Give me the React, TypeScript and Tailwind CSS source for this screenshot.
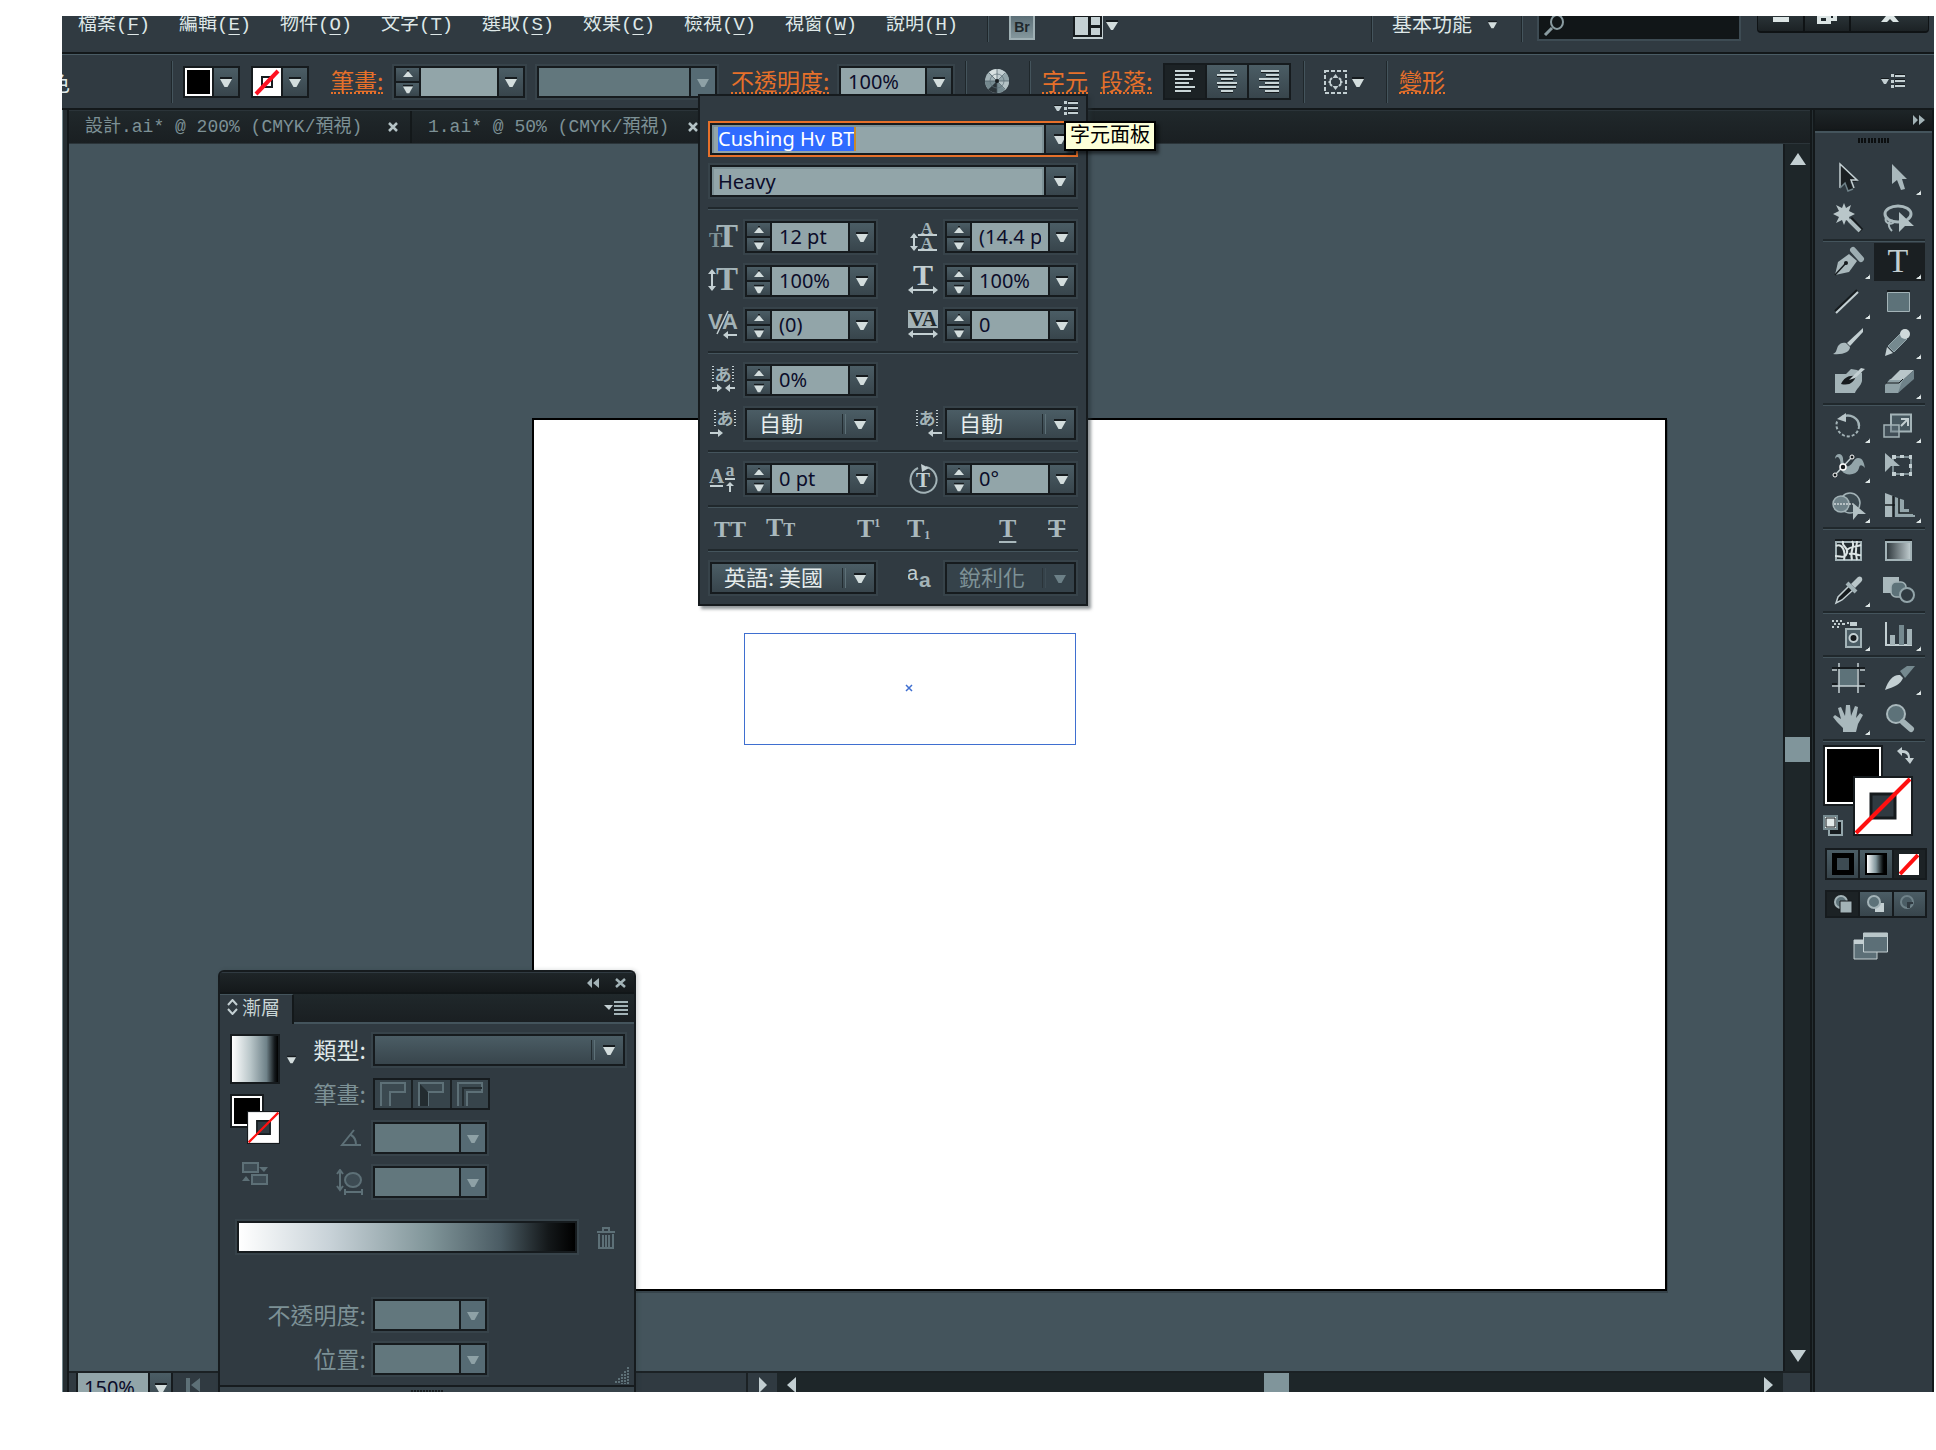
import type { ReactNode } from "react";
import clsx from "clsx";

const cjk = "font-['Noto_Sans_CJK_TC',sans-serif]";
const mono = "font-['Liberation_Mono','Noto_Sans_CJK_TC',monospace]";
const face = "bg-linear-to-b from-[#4b5d65] to-[#38454c]";
const LIGHT = "#c3cfd2";
const MID = "#a3b3b7";
const DIM = "#5d7077";
const DARK = "#161b1e";

const menus = [
  ["檔案", "F"],
  ["編輯", "E"],
  ["物件", "O"],
  ["文字", "T"],
  ["選取", "S"],
  ["效果", "C"],
  ["檢視", "V"],
  ["視窗", "W"],
  ["說明", "H"],
];

/* Small pieces */

function Down({ color = "#d3dddd", size = 12, flat }: { color?: string; size?: number; flat?: boolean }) {
  return (
    <svg width={size} height={size} viewBox="0 0 12 12" className="shrink-0">
      {!flat && <path d="M0 1h12v2H0z" fill={DARK} />}
      <path d="M0 3h12L7.500 11h-3z" fill={color} />
    </svg>
  );
}

function Up() {
  return (
    <svg width="10" height="8" viewBox="0 0 10 8">
      <path d="M4 0h2v2H4z" fill={DARK} />
      <path d="M5 1l5 6H0z" fill="#d3dddd" />
    </svg>
  );
}

function Sep() {
  return <div className="h-[42px] w-[2px] shrink-0 border-l border-[#1f272b] bg-[#44545c]" />;
}

function Rule() {
  return <div className="h-[3px] border-t-2 border-[#20282c] bg-[#44545c]" />;
}

function PanelMenu({ label }: { label: string }) {
  return (
    <button aria-label={label}>
      <svg width="24" height="15" viewBox="0 0 24 15">
        <path d="M0 4h8v1H0z" fill={DARK} />
        <path d="M0 5h8L5 10H3z" fill={LIGHT} />
        <path d="M10 0h3v3h-3zM10 6h3v3h-3zM10 11h3v3h-3zM14 1h10v2H14zM14 6h10v2H14zM14 11h10v2H14z" fill={LIGHT} />
        <path d="M14 0h10v1H14zM14 5h10v1H14zM14 10h10v1H14z" fill={DARK} />
      </svg>
    </button>
  );
}

type ComboProps = {
  label: string;
  id?: string;
  value?: string;
  spin?: boolean;
  dim?: boolean;
  width?: string;
};

function Combo({ label, id, value = "", spin, dim, width = "w-[131px]" }: ComboProps) {
  return (
    <div className={clsx("flex h-8 shrink-0 border-2 border-[#161b1e] shadow-[0_0_0_2px_#37434a]", width)}>
      {spin && (
        <div className="flex w-[25px] shrink-0 flex-col border-r-2 border-[#161b1e]">
          <button aria-label={label + " +"} className={clsx("flex flex-1 items-center justify-center border-b border-[#161b1e]", face)}>
            <Up />
          </button>
          <button aria-label={label + " -"} className={clsx("flex flex-1 items-center justify-center border-t border-[#161b1e]", face)}>
            <Down size={10} />
          </button>
        </div>
      )}
      <input
        id={id}
        aria-label={label}
        defaultValue={value}
        className={clsx(
          "min-w-0 flex-1 px-[7px] font-['Noto_Sans',sans-serif] text-[20px] leading-7 text-[#0c0d2a] outline-none",
          dim ? "bg-[#62777d]" : "bg-[#92a5a9]",
        )}
      />
      <button
        aria-label={label + " ▾"}
        className={clsx("flex w-[26px] shrink-0 items-center justify-center border-l-2 border-[#161b1e]", dim ? "bg-[#566b74]" : face)}
      >
        <Down color={dim ? "#8ea1a6" : "#d3dddd"} flat={dim} />
      </button>
    </div>
  );
}

function Choice({ label, id, value, dim, width = "w-[131px]" }: ComboProps) {
  return (
    <div
      className={clsx(
        "flex h-8 shrink-0 items-center border-2 border-[#161b1e] pr-2 shadow-[0_0_0_2px_#37434a]",
        dim ? "bg-[#35424a]" : face,
        width,
      )}
    >
      <select
        id={id}
        aria-label={label}
        className={clsx("h-7 min-w-0 flex-1 appearance-none pb-1 pl-3 text-[22px] leading-6 outline-none", cjk, dim ? "text-[#7d9196]" : "text-[#e6eded]")}
      >
        <option>{value}</option>
      </select>
      <span className={clsx("mr-2 h-5 w-[4px] border-x", dim ? "border-l-[#2b3439] border-r-[#3d4b53]" : "border-l-[#232c30] border-r-[#5d7077]")} />
      <Down color={dim ? "#6c8087" : "#d3dddd"} flat={dim} />
    </div>
  );
}

function NoneSwatch({ size }: { size: number }) {
  return (
    <svg width={size} height={size} viewBox="0 0 60 60" className="block">
      <path d="M0 0h60v60H0z" fill={DARK} />
      <path d="M2 2h56v56H2z" fill="#fff" />
      <path d="M18 18h24v24H18z" fill="#303a41" stroke={DARK} strokeWidth="3" />
      <path d="M3 57L57 3" stroke="#ff1010" strokeWidth="4" />
    </svg>
  );
}

/* Top bars */

function MenuBar() {
  return (
    <header className="flex h-[38px] shrink-0 items-start overflow-hidden border-b-2 border-[#13181a] pl-4 text-[#dfe8e8]">
      <nav className={clsx("flex text-[19px] leading-[18px]", mono)}>
        {menus.map(([name, key]) => (
          <button key={key} className="w-[101px] text-left whitespace-nowrap">
            {name}(<u className="underline-offset-4">{key}</u>)
          </button>
        ))}
      </nav>
      <div className="h-[26px] w-[2px] border-l border-[#1f272b] bg-[#44545c]" />
      <button aria-label="Bridge" className="ml-5 h-6 w-[26px] border-2 border-t-0 border-[#9fb0b4] bg-linear-to-b from-[#5c6f77] to-[#84979c] font-['Liberation_Sans',sans-serif] text-sm leading-5 font-bold text-[#20282c]">
        Br
      </button>
      <button aria-label="排列文件" className="ml-[38px] flex">
        <svg width="45" height="23" viewBox="0 0 45 23">
          <path d="M0 0h30v23H0z" fill={LIGHT} />
          <path d="M1 0h15v20H1z" fill="#c5d1d4" stroke={DARK} strokeWidth="2" />
          <path d="M17 0h11v10H17zM17 11h11v9H17z" fill="#c5d1d4" stroke={DARK} strokeWidth="2" />
          <path d="M33 4h12v2H33z" fill={DARK} />
          <path d="M33 6h12l-5 8h-2z" fill="#d3dddd" />
        </svg>
      </button>
      <div className="ml-auto h-[26px] w-[2px] border-l border-[#1f272b] bg-[#44545c]" />
      <button className={clsx("ml-[19px] flex items-center gap-4 text-[20px] leading-4", cjk)}>
        基本功能
        <Down size={9} />
      </button>
      <div className="ml-6 h-[26px] w-[2px] border-l border-[#1f272b] bg-[#44545c]" />
      <label className="ml-[14px] flex h-[25px] w-[204px] border-2 border-t-0 border-[#3d4b53] bg-[#111618] pl-1">
        <svg width="22" height="20" viewBox="0 0 22 20" fill="none" stroke="#8a9ca1" strokeWidth="2">
          <ellipse cx="14" cy="6" rx="6" ry="7" />
          <path d="M9 12L2 19" strokeWidth="3" />
        </svg>
        <input aria-label="搜尋" className="min-w-0 flex-1 bg-transparent text-sm outline-none" />
      </label>
      <div className="mr-[5px] ml-4 flex h-[17px] overflow-hidden rounded-b border-x border-b-2 border-[#0f1315] bg-linear-to-b from-[#2a3337] to-[#1c2225]">
        <button aria-label="最小化" className="flex w-[47px] justify-center border-r-2 border-[#0f1315]">
          <svg width="16" height="6"><path d="M0 1h16v5H0z" fill="#dce5e5" /></svg>
        </button>
        <button aria-label="還原" className="flex w-[46px] justify-center border-r-2 border-[#0f1315]">
          <svg width="20" height="8"><path d="M0 0h20v5h-6v3H0z" fill="#dce5e5" /><path d="M4 2h5v3H4zM14 0h2v2h-2z" fill="#20282c" /></svg>
        </button>
        <button aria-label="關閉" className="flex w-[77px] justify-center">
          <svg width="18" height="6"><path d="M5 0h8l5 6h-6L9 3 6 6H0z" fill="#dce5e5" /></svg>
        </button>
      </div>
    </header>
  );
}

function Orange({ children, width }: { children: ReactNode; width?: string }) {
  return (
    <div className={clsx("shrink-0", width)}>
      <button className={clsx("border-b-2 border-dotted border-[#e6702a] text-[23px] leading-6 whitespace-nowrap text-[#e6702a]", cjk)}>
        {children}
      </button>
    </div>
  );
}

const alignLines = {
  left: "M2 1h20M2 5h14M2 9h18M2 13h14M2 17h20M2 21h16",
  center: "M5 1h14M2 5h20M6 9h12M2 13h20M3 17h18M6 21h12",
  right: "M4 1h18M9 5h13M2 9h20M8 13h14M2 17h20M8 21h14",
};

function ControlBar() {
  return (
    <div className="flex h-14 shrink-0 items-center overflow-hidden border-t border-b-2 border-t-[#4a5c65] border-b-[#13181a]">
      <div className={clsx("flex w-[109px] shrink-0 overflow-hidden text-[22px] text-[#dfe8e8]", cjk)}>
        <span className="flex w-2 justify-end overflow-hidden">色</span>
      </div>
      <Sep />
      <button aria-label="填色" className={clsx("ml-[10px] flex h-8 w-[57px] shrink-0 items-center border-2 border-[#161b1e]", face)}>
        <span className="h-7 w-[27px] border-2 border-white bg-black" />
        <span className="flex h-7 flex-1 items-center justify-center border-l-2 border-[#161b1e]">
          <Down />
        </span>
      </button>
      <button aria-label="筆畫顏色" className={clsx("ml-[11px] flex h-8 w-[58px] shrink-0 items-center border-2 border-[#161b1e]", face)}>
        <svg width="28" height="28" viewBox="0 0 28 28">
          <path d="M0 0h28v28H0z" fill="#fff" />
          <path d="M9 9h10v10H9z" fill="#fff" stroke={DARK} strokeWidth="2" />
          <path d="M3 26L25 3" stroke="#ff1020" strokeWidth="4" />
        </svg>
        <span className="flex h-7 flex-1 items-center justify-center border-l-2 border-[#161b1e]">
          <Down />
        </span>
      </button>
      <div className="w-[22px] shrink-0" />
      <Orange width="w-[63px]">筆畫:</Orange>
      <Combo label="筆畫寬度" spin />
      <div className="w-3 shrink-0" />
      <Combo label="筆刷" dim width="w-[180px]" />
      <div className="w-[14px] shrink-0" />
      <Orange width="w-[108px]">不透明度:</Orange>
      <Combo label="不透明度" value="100%" width="w-[114px]" />
      <div className="w-3 shrink-0" />
      <Sep />
      <button aria-label="重新上色圖稿" className="mr-[19px] ml-[18px] shrink-0">
        <svg width="25" height="25" viewBox="0 0 25 25">
          <circle cx="12" cy="12" r="12" fill="#a3b3b7" />
          <path d="M12 12L4 3a12 12 0 0 1 8-3z" fill="#d8e1e1" />
          <path d="M12 12V0a12 12 0 0 1 9 4z" fill="#c3cfd2" />
          <path d="M12 12l9-8a12 12 0 0 1 3 8z" fill="#93a5aa" />
          <path d="M12 12h12a12 12 0 0 1-4 9z" fill="#b3c1c4" />
          <path d="M12 12l8 9a12 12 0 0 1-8 3z" fill="#75898f" />
          <path d="M12 12v12a12 12 0 0 1-9-4z" fill="#2b3439" />
          <path d="M12 12l-9 8a12 12 0 0 1-3-8z" fill="#75898f" />
          <path d="M4 4l16 16M20 4L4 20M12 0v24M0 12h24" stroke="#4b5d65" strokeWidth=".7" />
          <circle cx="12" cy="12" r="7" fill="none" stroke="#5c6f77" strokeWidth=".7" />
          <circle cx="12" cy="12" r="2" fill={DARK} />
        </svg>
      </button>
      <Sep />
      <div className="w-[11px] shrink-0" />
      <Orange width="w-[58px]">字元</Orange>
      <Orange width="w-[63px]">段落:</Orange>
      <div className="flex h-[37px] w-[128px] shrink-0 border-2 border-[#161b1e]">
        {(["left", "center", "right"] as const).map((side) => (
          <button
            key={side}
            aria-label={side}
            className={clsx(
              "flex flex-1 items-center justify-center border-r-2 border-[#161b1e] last:border-r-0",
              side === "left" ? "bg-[#1c2225]" : face,
            )}
          >
            <svg width="24" height="24" viewBox="0 0 24 24">
              <path d={alignLines[side]} transform="translate(0 1)" stroke={DARK} strokeWidth="2" />
              <path d={alignLines[side]} stroke="#c9d5d7" strokeWidth="2" />
            </svg>
          </button>
        ))}
      </div>
      <div className="w-3 shrink-0" />
      <Sep />
      <button aria-label="對齊" className="mr-[22px] ml-[19px] flex shrink-0 items-center gap-[5px]">
        <svg width="23" height="24" viewBox="0 0 23 24" fill="none" stroke={LIGHT}>
          <path d="M1 1h21v22H1z" strokeWidth="2" strokeDasharray="4 2" />
          <path d="M8 8l-2 2M15 8l2 2M8 16l-2-2M15 16l2-2" strokeWidth="2" />
          <path d="M11.500 4l-3 4h6zM11.500 20l-3-4h6zM4 12l3-3v6zM19 12l-3-3v6z" fill={LIGHT} stroke="none" />
        </svg>
        <Down />
      </button>
      <Sep />
      <div className="w-[11px] shrink-0" />
      <Orange>變形</Orange>
      <div className="mr-[29px] ml-auto flex">
        <PanelMenu label="控制列選單" />
      </div>
    </div>
  );
}

/* Document area */

function Tab({ title, width }: { title: string; width: string }) {
  return (
    <div className={clsx("flex h-full items-center justify-between border-r-2 border-[#13181a] pr-3 pl-4", width)}>
      <a href="#" className={clsx("text-[18px] whitespace-nowrap text-[#7d9196]", mono)}>
        {title}
      </a>
      <button aria-label="關閉檔案">
        <svg width="10" height="10" viewBox="0 0 10 10">
          <path d="M1 1l8 8M9 1L1 9" stroke="#b5c3c6" strokeWidth="2.500" />
        </svg>
      </button>
    </div>
  );
}

function Canvas() {
  return (
    <main className="relative min-w-0 flex-1 overflow-hidden bg-[#44545c]">
      <div className="absolute top-[274px] left-[463px] h-[873px] w-[1135px] border-2 border-black bg-white shadow-[1px_2px_0_#36434a]" />
      <div className="absolute top-[489px] left-[675px] flex h-[112px] w-[332px] items-center justify-center border border-[#3f6fd0] pr-[3px] pb-[2px]">
        <svg width="8" height="8" viewBox="0 0 8 8">
          <path d="M1 1l6 6M7 1L1 7" stroke="#3f6fd0" strokeWidth="1.500" />
        </svg>
      </div>
    </main>
  );
}

function StatusBar() {
  return (
    <div className="flex h-[21px] shrink-0 overflow-hidden border-t-2 border-[#1b2124]">
      <div className="ml-[7px] flex h-[30px] w-[97px] shrink-0 border-x-2 border-[#161b1e]">
        <input
          aria-label="縮放"
          defaultValue="150%"
          className="w-[70px] bg-[#92a5a9] px-[6px] font-['Noto_Sans',sans-serif] text-[20px] text-[#0c0d2a] outline-none"
        />
        <button aria-label="縮放選項" className={clsx("flex flex-1 items-center justify-center border-l-2 border-[#161b1e]", face)}>
          <Down />
        </button>
      </div>
      <button aria-label="第一頁" className="ml-3 shrink-0 self-start pt-[5px]">
        <svg width="16" height="14" viewBox="0 0 16 14">
          <path d="M1 0h4v14H1zM15 0v14L6 7z" fill={DIM} />
        </svg>
      </button>
      <div className="ml-auto" />
      <button aria-label="狀態選單" className="flex w-[31px] shrink-0 items-start justify-center border-l-2 border-[#1b2124] pt-1">
        <svg width="8" height="16" viewBox="0 0 8 16"><path d="M0 0l8 8-8 8z" fill={LIGHT} /></svg>
      </button>
      <div className="flex w-[1006px] shrink-0 justify-between bg-[#1e2629] px-[10px] pt-1">
        <button aria-label="向左捲動" className="self-start">
          <svg width="9" height="16" viewBox="0 0 9 16"><path d="M9 0v16L0 8z" fill={LIGHT} /></svg>
        </button>
        <div className="-mt-1 mr-2 h-6 w-[25px] bg-[#80959b]" />
        <button aria-label="向右捲動" className="self-start">
          <svg width="9" height="16" viewBox="0 0 9 16"><path d="M0 0v16l9-8z" fill={LIGHT} /></svg>
        </button>
      </div>
      <div className="w-[27px] shrink-0 bg-[#303a41]" />
    </div>
  );
}

function DocumentArea() {
  return (
    <div className="flex min-w-0 flex-1 flex-col">
      <div className="flex h-[34px] shrink-0 border-t border-b border-t-[#2b3439] border-b-[#2b3439] bg-linear-to-b from-[#20282b] to-[#1a1f22]">
        <Tab title="設計.ai* @ 200% (CMYK/預視)" width="w-[343px]" />
        <Tab title="1.ai* @ 50% (CMYK/預視)" width="w-[300px]" />
      </div>
      <div className="flex min-h-0 flex-1">
        <Canvas />
        <div className="flex w-[27px] shrink-0 flex-col items-center justify-between border-l-2 border-[#161b1e] bg-[#1e2629] py-[9px]">
          <button aria-label="向上捲動">
            <svg width="16" height="12" viewBox="0 0 16 12"><path d="M8 0l8 12H0z" fill={LIGHT} /></svg>
          </button>
          <div className="mb-4 h-[25px] w-full bg-[#80959b]" />
          <button aria-label="向下捲動">
            <svg width="16" height="12" viewBox="0 0 16 12"><path d="M0 0h16L8 12z" fill={LIGHT} /></svg>
          </button>
        </div>
      </div>
      <StatusBar />
    </div>
  );
}

/* Tools */

const serif = { fontFamily: "Liberation Serif, serif" };

function Tool({ label, flyout, active, children }: { label: string; flyout?: boolean; active?: boolean; children: ReactNode }) {
  return (
    <button aria-label={label} className={clsx("flex h-10 w-[51px] items-center pl-[9px]", active && "border-y border-[#303a41] bg-[#1a1f22]")}>
      <svg width="40" height="40" viewBox="0 -4 40 40">
        {children}
        {flyout && <path d="M38 28v5h-5l2-2h1v-1h1z" fill="#dbe4e4" />}
      </svg>
    </button>
  );
}

function ToolRule() {
  return (
    <div className="flex h-1 w-[102px] flex-col justify-center">
      <div className="h-[3px] border-t-2 border-[#20282c] bg-[#44545c]" />
    </div>
  );
}

function Tools() {
  return (
    <aside className="flex w-[119px] shrink-0 flex-col border-r-2 border-[#13181a]">
      <div className="flex h-[21px] shrink-0 items-center justify-end border-b-2 border-[#13181a] bg-linear-to-b from-[#1e2528] to-[#15191b] pr-[7px]">
        <button aria-label="收合">
          <svg width="12" height="10" viewBox="0 0 12 10"><path d="M0 0l5 5-5 5zM6 0l6 5-6 5z" fill={MID} /></svg>
        </button>
      </div>
      <div className="flex h-[27px] shrink-0 justify-center border-t-2 border-[#44545c] pt-[5px]">
        <svg width="32" height="5"><path d="M1 0v5M4 0v5M7 0v5M11 0v5M14 0v5M17 0v5M21 0v5M24 0v5M27 0v5M30 0v5" stroke="#0c0f10" strokeWidth="2" /></svg>
      </div>
      <div className="flex flex-col pl-2">
        <div className="flex flex-wrap">
          <Tool label="選取工具">
            <path d="M8 2v24l5-5 3 8 5-2-3-7h7z" fill="#1a1f22" />
            <path d="M8 26V2l17 16h-6l3 8" fill="none" stroke={LIGHT} strokeWidth="1.500" />
            <path d="M8 26l5-5 3 8 5-2" fill="none" stroke="#6f8289" strokeWidth="1.500" />
          </Tool>
          <Tool label="直接選取工具" flyout>
            <path d="M9 2v20l5-4 4 10 4-1-3-10h5z" fill="#a9b8bc" />
          </Tool>
          <Tool label="魔術棒工具">
            <path d="M18 17l11 12" stroke={DARK} strokeWidth="6" />
            <path d="M17 18l11 11" stroke="#a9b8bc" strokeWidth="4" />
            <path d="M12 1l2 5 5-3-2 6 6 3-6 3 2 6-5-3-2 5-2-5-6 3 3-6-6-3 6-3-3-6 6 3z" fill="#b9c6c9" />
          </Tool>
          <Tool label="套索工具">
            <ellipse cx="15" cy="12" rx="13" ry="8" fill="none" stroke="#a9b8bc" strokeWidth="3" />
            <path d="M3 15c-2 6 4 8 7 6s-3-4-4 0 1 6 3 8" fill="none" stroke="#a9b8bc" strokeWidth="2" />
            <path d="M16 10v20l6-6h9z" fill="#b3c1c4" />
          </Tool>
        </div>
        <ToolRule />
        <div className="flex flex-wrap">
          <Tool label="鋼筆工具" flyout>
            <path d="M3 29L6 16 17 8l8 7-8 11z" fill="#a9b8bc" />
            <path d="M3 29L14 17" stroke={DARK} strokeWidth="1.500" />
            <circle cx="14" cy="17" r="2" fill={DARK} />
            <path d="M21 4l8 9" stroke="#9dadb2" strokeWidth="6" strokeLinecap="round" />
          </Tool>
          <Tool label="文字工具" flyout active>
            <text x="15" y="26" fontSize="34" textAnchor="middle" fill={LIGHT} style={serif}>T</text>
          </Tool>
          <Tool label="線段區段工具" flyout>
            <path d="M3 25L25 4" stroke={DARK} strokeWidth="2" />
            <path d="M4 27L26 6" stroke={LIGHT} strokeWidth="2" />
          </Tool>
          <Tool label="矩形工具" flyout>
            <path d="M4 4h23v2H4z" fill={DARK} />
            <path d="M4.500 6.500h22v19h-22z" fill="#5d7279" stroke={MID} />
          </Tool>
          <Tool label="繪圖筆刷工具">
            <path d="M31 2v4L18 20l-3-3z" fill={LIGHT} />
            <path d="M14 17l4 4c0 5-7 8-17 7 4-2 3-4 5-8 2-3 5-4 8-3z" fill="#a9b8bc" />
          </Tool>
          <Tool label="鉛筆工具" flyout>
            <path d="M2 30l2-9 6 6z" fill={LIGHT} />
            <path d="M5 20L18 7l6 6L11 26z" fill="#75898f" stroke="#93a5aa" />
            <circle cx="22" cy="8" r="5" fill="#d0dadb" />
          </Tool>
          <Tool label="點滴筆刷工具">
            <path d="M3 8h11l5-5 6 1 5 3v8c-1 5-6 8-7 12H3z" fill="#a3b3b7" />
            <path d="M9 18c3-6 7-9 15-8-2 6-6 10-15 8z" fill={DARK} />
            <path d="M17 14L29 2l4 1-10 9z" fill={LIGHT} />
          </Tool>
          <Tool label="橡皮擦工具" flyout>
            <path d="M2 27v-8l5-6h14l-1 8-5 6z" fill="#8fa1a6" />
            <path d="M7 14L17 4h14L20 14z" fill="#b9c6c9" />
            <path d="M20 14L31 4v9L15 27l3-9z" fill="#6f8289" />
            <path d="M3 17h13l4-4" stroke={DARK} fill="none" />
          </Tool>
        </div>
        <ToolRule />
        <div className="flex flex-wrap">
          <Tool label="旋轉工具" flyout>
            <path d="M10 7c8-4 17 1 17 9" fill="none" stroke={MID} strokeWidth="2.500" />
            <path d="M27 16c0 8-9 13-16 9S3 14 6 10" fill="none" stroke={MID} strokeWidth="2" strokeDasharray="3 2" />
            <path d="M5 9l9-6v9z" fill="#b9c6c9" />
          </Tool>
          <Tool label="縮放工具" flyout>
            <path d="M8 4.500h20v17H8z" fill="#46575f" stroke={MID} strokeWidth="2" />
            <path d="M1 15h15v12H1z" fill="#5c6f7766" stroke={MID} strokeWidth="1.500" />
            <path d="M18 16l6-6M18 9h7v7" stroke={LIGHT} strokeWidth="2" fill="none" />
          </Tool>
          <Tool label="寬度工具" flyout>
            <path d="M3 9c0-6 7-7 8-1 0 7 3 9 6 8 4-2 5-8 9-8 5 0 6 5 7 10-3-3-5-4-6 0-2 8-14 8-17 3-3-4 0-9-3-13-1-2-3-1-4 1z" fill="#93a5aa" />
            <path d="M3 25L20 7" stroke={LIGHT} strokeWidth="1.500" />
            <circle cx="11" cy="17" r="3" fill={DARK} stroke="#fff" strokeWidth="1.500" />
            <circle cx="3" cy="25" r="2" fill={DARK} stroke="#fff" />
            <circle cx="20" cy="7" r="2" fill={DARK} stroke="#fff" />
          </Tool>
          <Tool label="任意變形工具">
            <path d="M10 7h18v17H10z" fill="none" stroke="#93a5aa" strokeWidth="1.500" />
            <path d="M9 5h4v4H9zM17 5h4v3h-4zM26 5h3v4h-3zM26 14h3v4h-3zM26 22h3v4h-3zM17 23h4v3h-4zM9 22h4v4H9z" fill={LIGHT} />
            <path d="M2 3v19l6-6h9z" fill="#a9b8bc" />
          </Tool>
          <Tool label="形狀建立程式工具" flyout>
            <circle cx="18" cy="13" r="10" fill="#3b4950" stroke={MID} strokeWidth="1.500" />
            <circle cx="9" cy="14" r="8" fill="#6f8289" stroke={MID} strokeWidth="1.500" />
            <path d="M2 14h19" stroke="#fff" strokeDasharray="2 1" />
            <path d="M21 13v17l5-6h8z" fill="#b3c1c4" />
          </Tool>
          <Tool label="透視格點工具" flyout>
            <path d="M2 3l8 3v21H2z" fill="#a9b8bc" />
            <path d="M12 7l9 3v9h5v3h4v3h2v2H12z" fill="#93a5aa" />
            <path d="M2 15h10M10 6v21M16 8v15h14" stroke={DARK} strokeWidth="1.500" fill="none" />
          </Tool>
        </div>
        <ToolRule />
        <div className="flex flex-wrap">
          <Tool label="網格工具">
            <path d="M3 5h27v2H3z" fill={DARK} />
            <path d="M4 8h25v18H4z" fill="#232c30" stroke={MID} strokeWidth="2" />
            <path d="M4 12c6-3 10 5 8 14M11 7c-2 6 6 6 4 12s-5 3-12 3M20 7c4 6-3 8 0 19M15 16c4-4 9-3 14-5M17 20c4-2 8 2 12 1M25 7c0 6-3 9 0 19" stroke="#dbe4e4" strokeWidth="2" fill="none" />
          </Tool>
          <Tool label="漸層工具">
            <defs>
              <linearGradient id="tool-grad">
                <stop offset="0" stopColor="#2b3439" />
                <stop offset="1" stopColor="#c3cfd2" />
              </linearGradient>
            </defs>
            <path d="M2 5h27v2H2z" fill={DARK} />
            <path d="M3 8h25v18H3z" fill="url(#tool-grad)" stroke={MID} strokeWidth="2" />
          </Tool>
          <Tool label="檢色滴管工具" flyout>
            <path d="M4 29l2-6L17 12l4 4L10 26z" fill={DARK} stroke={LIGHT} strokeWidth="1.500" />
            <path d="M15 9l9 9" stroke={MID} strokeWidth="4" />
            <path d="M19 10L26 3c3-2 6 2 3 5l-6 6z" fill="#b9c6c9" />
          </Tool>
          <Tool label="漸變工具">
            <path d="M0 3h16v16H0z" fill="#a9b8bc" />
            <rect x="8" y="8" width="15" height="15" rx="5" fill="#5d7279" stroke={MID} strokeWidth="1.500" />
            <circle cx="24" cy="21" r="7" fill="#303a41" stroke="#93a5aa" strokeWidth="2" />
          </Tool>
        </div>
        <ToolRule />
        <div className="flex flex-wrap">
          <Tool label="符號噴灑器工具" flyout>
            <path d="M0 3h2M4 3h2M8 3h2M2 6h2M6 6h2M10 6h3M0 9h2M5 9h2M15 5h2" stroke={LIGHT} strokeWidth="2" />
            <path d="M18 4h7v4h-7z" fill={LIGHT} />
            <path d="M14 11h15v18H14z" fill="#4b5d65" stroke={MID} strokeWidth="2" />
            <circle cx="21.500" cy="20" r="4" fill={DARK} stroke={LIGHT} strokeWidth="2" />
          </Tool>
          <Tool label="長條圖工具" flyout>
            <path d="M3 4v23h26" stroke={LIGHT} strokeWidth="2" fill="none" />
            <path d="M7 17h5v10H7zM24 11h5v16h-5z" fill={MID} />
            <path d="M16 7h5v20h-5z" fill="#75898f" />
          </Tool>
        </div>
        <ToolRule />
        <div className="flex flex-wrap">
          <Tool label="工作區域工具">
            <path d="M7 7h18v17H7z" fill="#5d7279" />
            <path d="M7 1v30M26 1v30" stroke={LIGHT} strokeWidth="1.500" />
            <path d="M0 8h5M28 8h5M0 24h33" stroke={LIGHT} strokeWidth="1.500" />
            <path d="M0 6h33M0 22h5M28 22h5" stroke={DARK} strokeWidth="2" />
          </Tool>
          <Tool label="切片工具" flyout>
            <path d="M17 9L24 4h8L22 16z" fill="#75898f" />
            <path d="M2 28C5 18 11 12 17 13l3 3C18 22 11 25 2 28z" fill="#c3cfd2" />
          </Tool>
          <Tool label="手形工具" flyout>
            <path d="M11 30v-4l-6-6-4-5 2-2 6 4L6 6l3-1 4 9 1-11h4l1 11 4-10 3 1-2 11 4-5 3 2-5 9-2 8z" fill="#a9b8bc" />
          </Tool>
          <Tool label="放大鏡工具">
            <circle cx="13" cy="12" r="9" fill="#5d7279" stroke="#a9b8bc" strokeWidth="2" />
            <path d="M20 20l8 7" stroke="#a3b3b7" strokeWidth="6" strokeLinecap="round" />
          </Tool>
        </div>
        <ToolRule />
        <div className="relative mt-[3px] h-[91px] w-[102px]">
          <button aria-label="填色" className="absolute top-0 left-0 h-[61px] w-[60px] border-2 border-[#161b1e]">
            <span className="block h-full border-2 border-white bg-black" />
          </button>
          <button aria-label="筆畫" className="absolute top-[31px] left-[30px]">
            <NoneSwatch size={60} />
          </button>
          <button aria-label="切換填色與筆畫" className="absolute top-0 left-[74px]">
            <svg width="18" height="20" viewBox="0 0 18 20">
              <path d="M0 6l5-4v3c6 0 8 3 8 8h4l-4 6-5-6h3c0-3-2-5-6-5v3z" fill={LIGHT} />
            </svg>
          </button>
          <button aria-label="預設填色與筆畫" className="absolute top-[69px] left-0">
            <svg width="20" height="22" viewBox="0 0 20 22">
              <path d="M6 7h13v14H6z" fill={DARK} stroke="#93a5aa" strokeWidth="2" />
              <path d="M1 2h13v13H1z" fill="#e2eaea" stroke="#75898f" strokeWidth="2" />
              <path d="M3 4h9v9H3z" fill="#e2eaea" stroke={DARK} />
            </svg>
          </button>
        </div>
        <div className="mt-3 ml-[2px] flex h-8 w-[102px] border-2 border-[#161b1e]">
          <button aria-label="顏色" className={clsx("flex flex-1 items-center justify-center border-r-2 border-[#161b1e]", face)}>
            <span className="h-[22px] w-[22px] border-[5px] border-black bg-[#3d4b53]" />
          </button>
          <button aria-label="漸層" className={clsx("flex flex-1 items-center justify-center border-r-2 border-[#161b1e]", face)}>
            <span className="h-[22px] w-[22px] border-2 border-black bg-linear-to-r from-white via-[#80959b] to-black" />
          </button>
          <button aria-label="無" className="flex flex-1 items-center justify-center bg-[#1c2225]">
            <svg width="20" height="21" viewBox="0 0 20 21">
              <path d="M0 0h20v21H0z" fill="#fff" />
              <path d="M1 20L19 1" stroke="#ff1010" strokeWidth="4" />
            </svg>
          </button>
        </div>
        <div className="mt-[10px] ml-[2px] flex h-7 w-[102px] border-2 border-[#161b1e]">
          {["一般繪製", "繪製下層", "繪製內側"].map((mode, i) => (
            <button
              key={mode}
              aria-label={mode}
              className={clsx("flex flex-1 items-center justify-center border-r-2 border-[#161b1e] last:border-r-0", i === 0 ? "bg-[#1c2225]" : face)}
            >
              <svg width="20" height="20" viewBox="0 0 20 20">
                {i === 1 && <path d="M9 9h9v9H9z" fill={LIGHT} />}
                <circle cx="8" cy="8" r="6" fill={i === 2 ? "#4b5d65" : "#5d7279"} stroke={i === 2 ? "#6f8289" : MID} strokeWidth="2" />
                {i === 0 && <path d="M7 7h12v12H7z" fill={MID} stroke={DARK} />}
                {i === 2 && <path d="M8 8h6v2h-3v4H8z" fill="#303a41" />}
              </svg>
            </button>
          ))}
        </div>
        <button aria-label="變更螢幕模式" className="mt-[14px] ml-[30px] w-[35px]">
          <svg width="35" height="28" viewBox="0 0 35 28">
            <path d="M1 8h23v19H1z" fill="#5c6f77" stroke={LIGHT} />
            <path d="M1 8h9v4H1z" fill={LIGHT} />
            <path d="M10.500 1h24v19h-24z" fill="#5c6f77" stroke={LIGHT} />
            <path d="M10 1h25v4H10z" fill="#b9c6c9" />
          </svg>
        </button>
      </div>
    </aside>
  );
}

/* Character panel */

function Glyph({ children }: { children: ReactNode }) {
  return (
    <svg width="37" height="32" viewBox="0 0 37 32" className="shrink-0" style={serif} fill={MID}>
      {children}
    </svg>
  );
}

function HArrow({ y }: { y: number }) {
  return <path d={`M0 ${y}l5-4v3h20v-3l5 4-5 4v-3H5v3z`} fill={LIGHT} />;
}

function VArrow({ x }: { x: number }) {
  return <path d={`M${x} 4l4 5h-3v12h3l-4 5-4-5h3V9h-3z`} fill={LIGHT} />;
}

function Kana({ x }: { x: number }) {
  return (
    <>
      <path d={`M${x} 2v16M${x + 20} 2v16`} stroke={LIGHT} strokeWidth="2" strokeDasharray="1 2" />
      <text x={x + 10} y="17" fontSize="17" fontWeight="bold" textAnchor="middle" fontFamily="Noto Sans CJK JP, sans-serif">あ</text>
    </>
  );
}

function Row({ children, last }: { children: ReactNode; last?: boolean }) {
  return <div className={clsx("flex items-center", !last && "mb-3")}>{children}</div>;
}

function CharacterPanel() {
  return (
    <section aria-label="字元面板" className="absolute top-[78px] left-[636px] w-[390px] border-2 border-[#161b1e] bg-[#303a41] px-2 pb-[10px] shadow-[3px_3px_3px_#26303580]">
      <div className="flex h-[25px] items-start justify-end pt-[5px]">
        <PanelMenu label="字元面板選單" />
      </div>
      <div className="flex h-9 border-2 border-[#e6702a]">
        <div className="flex flex-1 border-2 border-[#161b1e]">
          <div className="flex flex-1 items-center border-2 border-b-0 border-[#7d9196] bg-[#92a5a9] pb-[2px] pl-1">
            <input
              aria-label="字體"
              defaultValue="Cushing Hv BT"
              className="border-r-2 border-[#c98a2a] bg-[#2f6bff] font-['Noto_Sans',sans-serif] text-[20px] leading-6 text-white outline-none [field-sizing:content]"
            />
          </div>
          <button aria-label="字體清單" className={clsx("flex w-[30px] items-center justify-center border-l-2 border-[#161b1e]", face)}>
            <Down />
          </button>
        </div>
      </div>
      <div className="mx-[2px] mt-2 mb-[10px] flex h-8 border-2 border-[#161b1e] shadow-[0_0_0_2px_#37434a]">
        <input
          aria-label="字體樣式"
          defaultValue="Heavy"
          className="min-w-0 flex-1 border-2 border-b-0 border-[#7d9196] bg-[#92a5a9] pl-1 font-['Noto_Sans',sans-serif] text-[20px] leading-6 text-[#0c0d2a] outline-none"
        />
        <button aria-label="字體樣式清單" className={clsx("flex w-[30px] items-center justify-center border-l-2 border-[#161b1e]", face)}>
          <Down />
        </button>
      </div>
      <Rule />
      <div className="mt-[11px] mb-[10px]">
        <Row>
          <Glyph>
            <text x="1" y="26" fontSize="20" fontWeight="bold" fill="#7d9196">T</text>
            <text x="8" y="26" fontSize="33" fontWeight="bold" fill={MID}>T</text>
          </Glyph>
          <Combo label="字體大小" value="12 pt" spin />
          <div className="w-8" />
          <Glyph>
            <text x="19" y="13" fontSize="17" fontWeight="bold" textAnchor="middle">A</text>
            <text x="19" y="28" fontSize="17" fontWeight="bold" textAnchor="middle">A</text>
            <path d="M10 14h19M10 29h19" stroke={LIGHT} strokeWidth="2" />
            <path d="M6 12l4 5H7v8h3l-4 5-4-5h3v-8H2z" fill={LIGHT} />
          </Glyph>
          <Combo label="行距" value="(14.4 pt)" spin />
        </Row>
        <Row>
          <Glyph>
            <VArrow x={4} />
            <text x="8" y="25" fontSize="33" fontWeight="bold">T</text>
          </Glyph>
          <Combo label="垂直縮放" value="100%" spin />
          <div className="w-8" />
          <Glyph>
            <text x="15" y="20" fontSize="30" fontWeight="bold" textAnchor="middle" fill={LIGHT}>T</text>
            <HArrow y={25} />
          </Glyph>
          <Combo label="水平縮放" value="100%" spin />
        </Row>
        <Row last>
          <Glyph>
            <g fontFamily="Liberation Sans, sans-serif" fontSize="22" fontWeight="bold" fill={MID}>
              <text x="0" y="20">V</text>
              <text x="14" y="20">A</text>
            </g>
            <path d="M9 25L20 2" stroke={LIGHT} strokeWidth="1.500" />
            <path d="M15 26l5-4v3h9v2h-9v3z" fill={LIGHT} />
          </Glyph>
          <Combo label="特殊字距" value="(0)" spin />
          <div className="w-8" />
          <Glyph>
            <path d="M0 1h30v18H0z" fill={MID} />
            <text x="15" y="17" fontSize="21" fontWeight="bold" textAnchor="middle" fill="#20282c">VA</text>
            <HArrow y={25} />
          </Glyph>
          <Combo label="字距微調" value="0" spin />
        </Row>
      </div>
      <Rule />
      <div className="mt-[10px] mb-[10px]">
        <Row>
          <Glyph>
            <Kana x={5} />
            <path d="M4 23h5v-3l5 4-5 4v-3H4zM27 23h-5v-3l-5 4 5 4v-3h5z" fill={LIGHT} />
          </Glyph>
          <Combo label="比例間距" value="0%" spin />
        </Row>
        <Row last>
          <Glyph>
            <Kana x={7} />
            <path d="M2 24h8v-3l5 4-5 4v-3H2z" fill={LIGHT} />
          </Glyph>
          <Choice label="插入空格(左)" value="自動" />
          <div className="w-8" />
          <Glyph>
            <Kana x={9} />
            <path d="M34 24h-9v-3l-5 4 5 4v-3h9z" fill={LIGHT} />
          </Glyph>
          <Choice label="插入空格(右)" value="自動" />
        </Row>
      </div>
      <Rule />
      <div className="my-[10px]">
        <Row last>
          <Glyph>
            <text x="1" y="20" fontSize="21" fontWeight="bold">A</text>
            <text x="22" y="13" fontSize="18" fontWeight="bold" textAnchor="middle">a</text>
            <path d="M2 23h13M17 16h10" stroke={LIGHT} strokeWidth="2" />
            <path d="M22 19l4 4h-3v6h-2v-6h-3z" fill={LIGHT} />
          </Glyph>
          <Combo label="基線微移" value="0 pt" spin />
          <div className="w-8" />
          <Glyph>
            <path d="M18 4a13 13 0 1 1-8 1" fill="none" stroke={MID} strokeWidth="2" />
            <path d="M13 1l8 4-7 4z" fill={LIGHT} />
            <text x="15" y="24" fontSize="21" fontWeight="bold" textAnchor="middle" fill={LIGHT}>T</text>
          </Glyph>
          <Combo label="字元旋轉" value="0°" spin />
        </Row>
      </div>
      <Rule />
      <div className="flex h-[41px] items-center pl-[6px] font-['Liberation_Serif',serif] text-[26px] leading-6 font-bold text-[#a9b8bc]">
        <button className="w-[52px] text-left text-[24px]">TT</button>
        <button className="w-[91px] text-left">
          T<span className="text-[18px]">T</span>
        </button>
        <button className="flex w-[50px] items-start">
          T<span className="text-xs leading-3">1</span>
        </button>
        <button className="flex w-[92px] items-end">
          T<span className="text-xs leading-3">1</span>
        </button>
        <button className="w-[49px] text-left underline underline-offset-4">T</button>
        <button className="line-through">T</button>
      </div>
      <Rule />
      <div className="mt-[10px] ml-[2px] flex items-center">
        <Choice label="語言" value="英語: 美國" width="w-[166px]" />
        <div className="w-8" />
        <svg width="37" height="32" viewBox="0 0 37 32" className="shrink-0" fontFamily="Liberation Sans, sans-serif">
          <text x="-1" y="18" fontSize="20" fill={LIGHT}>a</text>
          <text x="11" y="25" fontSize="21" fontWeight="bold" fill={MID}>a</text>
        </svg>
        <Choice label="消除鋸齒" value="銳利化" dim />
      </div>
    </section>
  );
}

/* Gradient panel */

function Label({ id, children, dim }: { id: string; children: ReactNode; dim?: boolean }) {
  return (
    <label
      htmlFor={id}
      className={clsx("w-[146px] shrink-0 pr-[7px] text-right text-[23px] leading-[30px] whitespace-nowrap", cjk, dim ? "text-[#7d9196]" : "text-[#dfe8e8]")}
    >
      {children}
    </label>
  );
}

function GradientPanel() {
  return (
    <section aria-label="漸層" className="absolute bottom-0 left-[156px] w-[418px] overflow-hidden rounded-t-md border-x-2 border-t-2 border-[#161b1e] bg-[#303a41] shadow-[2px_0_4px_#20282c30]">
      <div className="flex h-[22px] items-center justify-end gap-4 border-t border-b-2 border-t-[#303a41] border-b-[#111618] bg-linear-to-b from-[#1e2528] to-[#15191b] pr-2">
        <button aria-label="收合">
          <svg width="12" height="10" viewBox="0 0 12 10"><path d="M5 0v10L0 5zM12 0v10L6 5z" fill={MID} /></svg>
        </button>
        <button aria-label="關閉">
          <svg width="11" height="10" viewBox="0 0 11 10"><path d="M1 1l9 8M10 1L1 9" stroke={MID} strokeWidth="2.500" /></svg>
        </button>
      </div>
      <div className="flex h-[30px] border-b-2 border-[#44545c] bg-linear-to-b from-[#20282b] to-[#1a1f22]">
        <button className={clsx("flex h-[30px] w-[74px] items-center gap-1 border-t border-r-2 border-t-[#44545c] border-r-[#13181a] bg-[#303a41] pb-[5px] pl-[7px] text-[19px] leading-6 text-[#c9d5d5]", cjk)}>
          <svg width="11" height="16" viewBox="0 0 11 16" fill="none" stroke={LIGHT} strokeWidth="2">
            <path d="M1 6l4.500-5L10 6M1 10l4.500 5L10 10" />
          </svg>
          漸層
        </button>
        <div className="ml-auto flex items-center pr-[6px] pb-[2px]">
          <button aria-label="漸層面板選單">
            <svg width="24" height="15" viewBox="0 0 24 15">
              <path d="M0 5h9l-4 5z" fill={LIGHT} />
              <path d="M10 1h14v2H10zM10 5h14v2H10zM10 9h14v2H10zM10 13h14v2H10z" fill={MID} />
            </svg>
          </button>
        </div>
      </div>
      <div className="flex pt-[10px]">
        <div className="flex w-[77px] shrink-0 flex-col pl-[10px]">
          <div className="flex items-center gap-[7px]">
            <span className="h-[50px] w-[50px] shrink-0 border-2 border-[#161b1e] bg-[linear-gradient(to_right,#fff,#b9c6c9_40%,#6f8289_75%,#161b1e_92%,#000)]" />
            <Down size={9} />
          </div>
          <div className="relative mt-[10px] h-[50px] w-[50px]">
            <div className="absolute top-0 left-0 h-[34px] w-[34px] border-2 border-[#161b1e] bg-white p-[2px]">
              <div className="h-full bg-black" />
            </div>
            <div className="absolute right-0 bottom-0">
              <NoneSwatch size={33} />
            </div>
          </div>
          <button aria-label="反轉漸層" className="mt-[18px] ml-3 w-7">
            <svg width="27" height="24" viewBox="0 0 27 24" fill="#3d4b53" stroke={DIM} strokeWidth="2">
              <path d="M1 1h15v9H1zM10 13h15v9H10z" />
              <path d="M17 5h9l-4 5zM0 19l4-5 4 5z" fill={DIM} stroke="none" />
            </svg>
          </button>
        </div>
        <div className="-ml-[70px] flex w-full flex-col gap-3 pr-[10px]">
          <div className="flex">
            <Label id="type">類型:</Label>
            <Choice label="類型" id="type" value="" width="w-[252px]" />
          </div>
          <div className="flex">
            <Label id="stroke" dim>筆畫:</Label>
            <div className="flex h-8 w-[117px] border-2 border-[#161b1e] bg-[#37444b]">
              {[0, 1, 2].map((i) => (
                <button key={i} id={i === 0 ? "stroke" : undefined} aria-label={"筆畫 " + (i + 1)} className="flex flex-1 items-center justify-center border-r-2 border-[#1c2225] last:border-r-0">
                  <svg width="26" height="26" viewBox="0 0 26 26" fill="none" stroke={DIM} strokeWidth="2">
                    <path d="M1 25V2h24v9H10v14" fill="#3b4950" />
                    {i === 1 && <path d="M2 3l8 8v14H2z" fill="#232c30" stroke="none" />}
                    {i === 2 && <path d="M6 25V7h19" stroke="#232c30" />}
                  </svg>
                </button>
              ))}
            </div>
          </div>
          <div className="flex">
            <label htmlFor="angle" aria-label="角度" className="flex w-[146px] shrink-0 items-center justify-end pr-3">
              <svg width="21" height="18" viewBox="0 0 21 18" fill="none" stroke={DIM} strokeWidth="2">
                <path d="M14 1L2 16h19M11 6c4 2 5 6 5 10" />
              </svg>
            </label>
            <Combo label="角度" id="angle" dim width="w-[114px]" />
          </div>
          <div className="flex">
            <label htmlFor="ratio" aria-label="外觀比例" className="flex w-[146px] shrink-0 items-center justify-end pr-[10px]">
              <svg width="27" height="26" viewBox="0 0 27 26" fill="none" stroke={DIM} strokeWidth="2">
                <path d="M4 2v18M1 5l3-4 3 4M1 17l3 4 3-4" />
                <ellipse cx="17" cy="11" rx="8" ry="7" fill="#3d4b53" />
                <path d="M9 20v6M26 20v6M9 23h17" />
              </svg>
            </label>
            <Combo label="外觀比例" id="ratio" dim width="w-[114px]" />
          </div>
        </div>
      </div>
      <div className="mt-[23px] flex items-center pl-[17px]">
        <div className="h-8 w-[340px] border-2 border-[#161b1e] bg-[linear-gradient(to_right,#fff,#c8d2d8_27%,#7f9498_57%,#4a5b63_78%,#14181a_92%,#000)] shadow-[0_0_0_2px_#37434a]" />
        <button aria-label="刪除色標" className="ml-5">
          <svg width="18" height="23" viewBox="0 0 18 23" fill="none" stroke={DIM} strokeWidth="2">
            <path d="M0 6h18M6 5V2h6v3M2 8v14h14V8M6 9v12M9 9v12M12 9v12" />
          </svg>
        </button>
      </div>
      <div className="mt-[46px] flex flex-col gap-3 pl-[7px]">
        <div className="flex">
          <Label id="opacity" dim>不透明度:</Label>
          <Combo label="不透明度" id="opacity" dim width="w-[114px]" />
        </div>
        <div className="flex">
          <Label id="location" dim>位置:</Label>
          <Combo label="位置" id="location" dim width="w-[114px]" />
          <svg width="16" height="17" viewBox="0 0 16 17" className="mt-6 mr-1 -mb-6 ml-auto">
            <path d="M14 0v17M11 4v13M8 7v10M5 11v6M2 14v3" stroke={DIM} strokeWidth="2" strokeDasharray="2 1" />
          </svg>
        </div>
      </div>
      <div className="mt-[10px] flex h-[7px] items-end justify-center border-t-2 border-[#161b1e] bg-[#37434a]">
        <svg width="32" height="2"><path d="M0 1h32" stroke={DARK} strokeWidth="2" strokeDasharray="2 1" /></svg>
      </div>
    </section>
  );
}

export default function App() {
  return (
    <div className="flex h-screen flex-col bg-white pt-4 pr-[2px] pb-[58px] pl-[62px]">
      <div className="relative flex min-h-0 flex-1 flex-col overflow-hidden bg-[#303a41]">
        <MenuBar />
        <ControlBar />
        <div className="flex min-h-0 flex-1">
          <div className="w-[7px] shrink-0 border-r-2 border-l border-r-[#13181a] border-l-[#75898f] bg-[#252e32]" />
          <DocumentArea />
          <div className="w-[5px] shrink-0 border-x-2 border-[#13181a] bg-[#252e32]" />
          <Tools />
        </div>
        <CharacterPanel />
        <div role="tooltip" className={clsx("absolute top-[105px] left-[1002px] h-[30px] border-2 border-black bg-[#fcffd8] px-1 text-[20px] leading-[22px] text-black shadow-[3px_3px_3px_#00000080]", cjk)}>
          字元面板
        </div>
        <GradientPanel />
      </div>
    </div>
  );
}
